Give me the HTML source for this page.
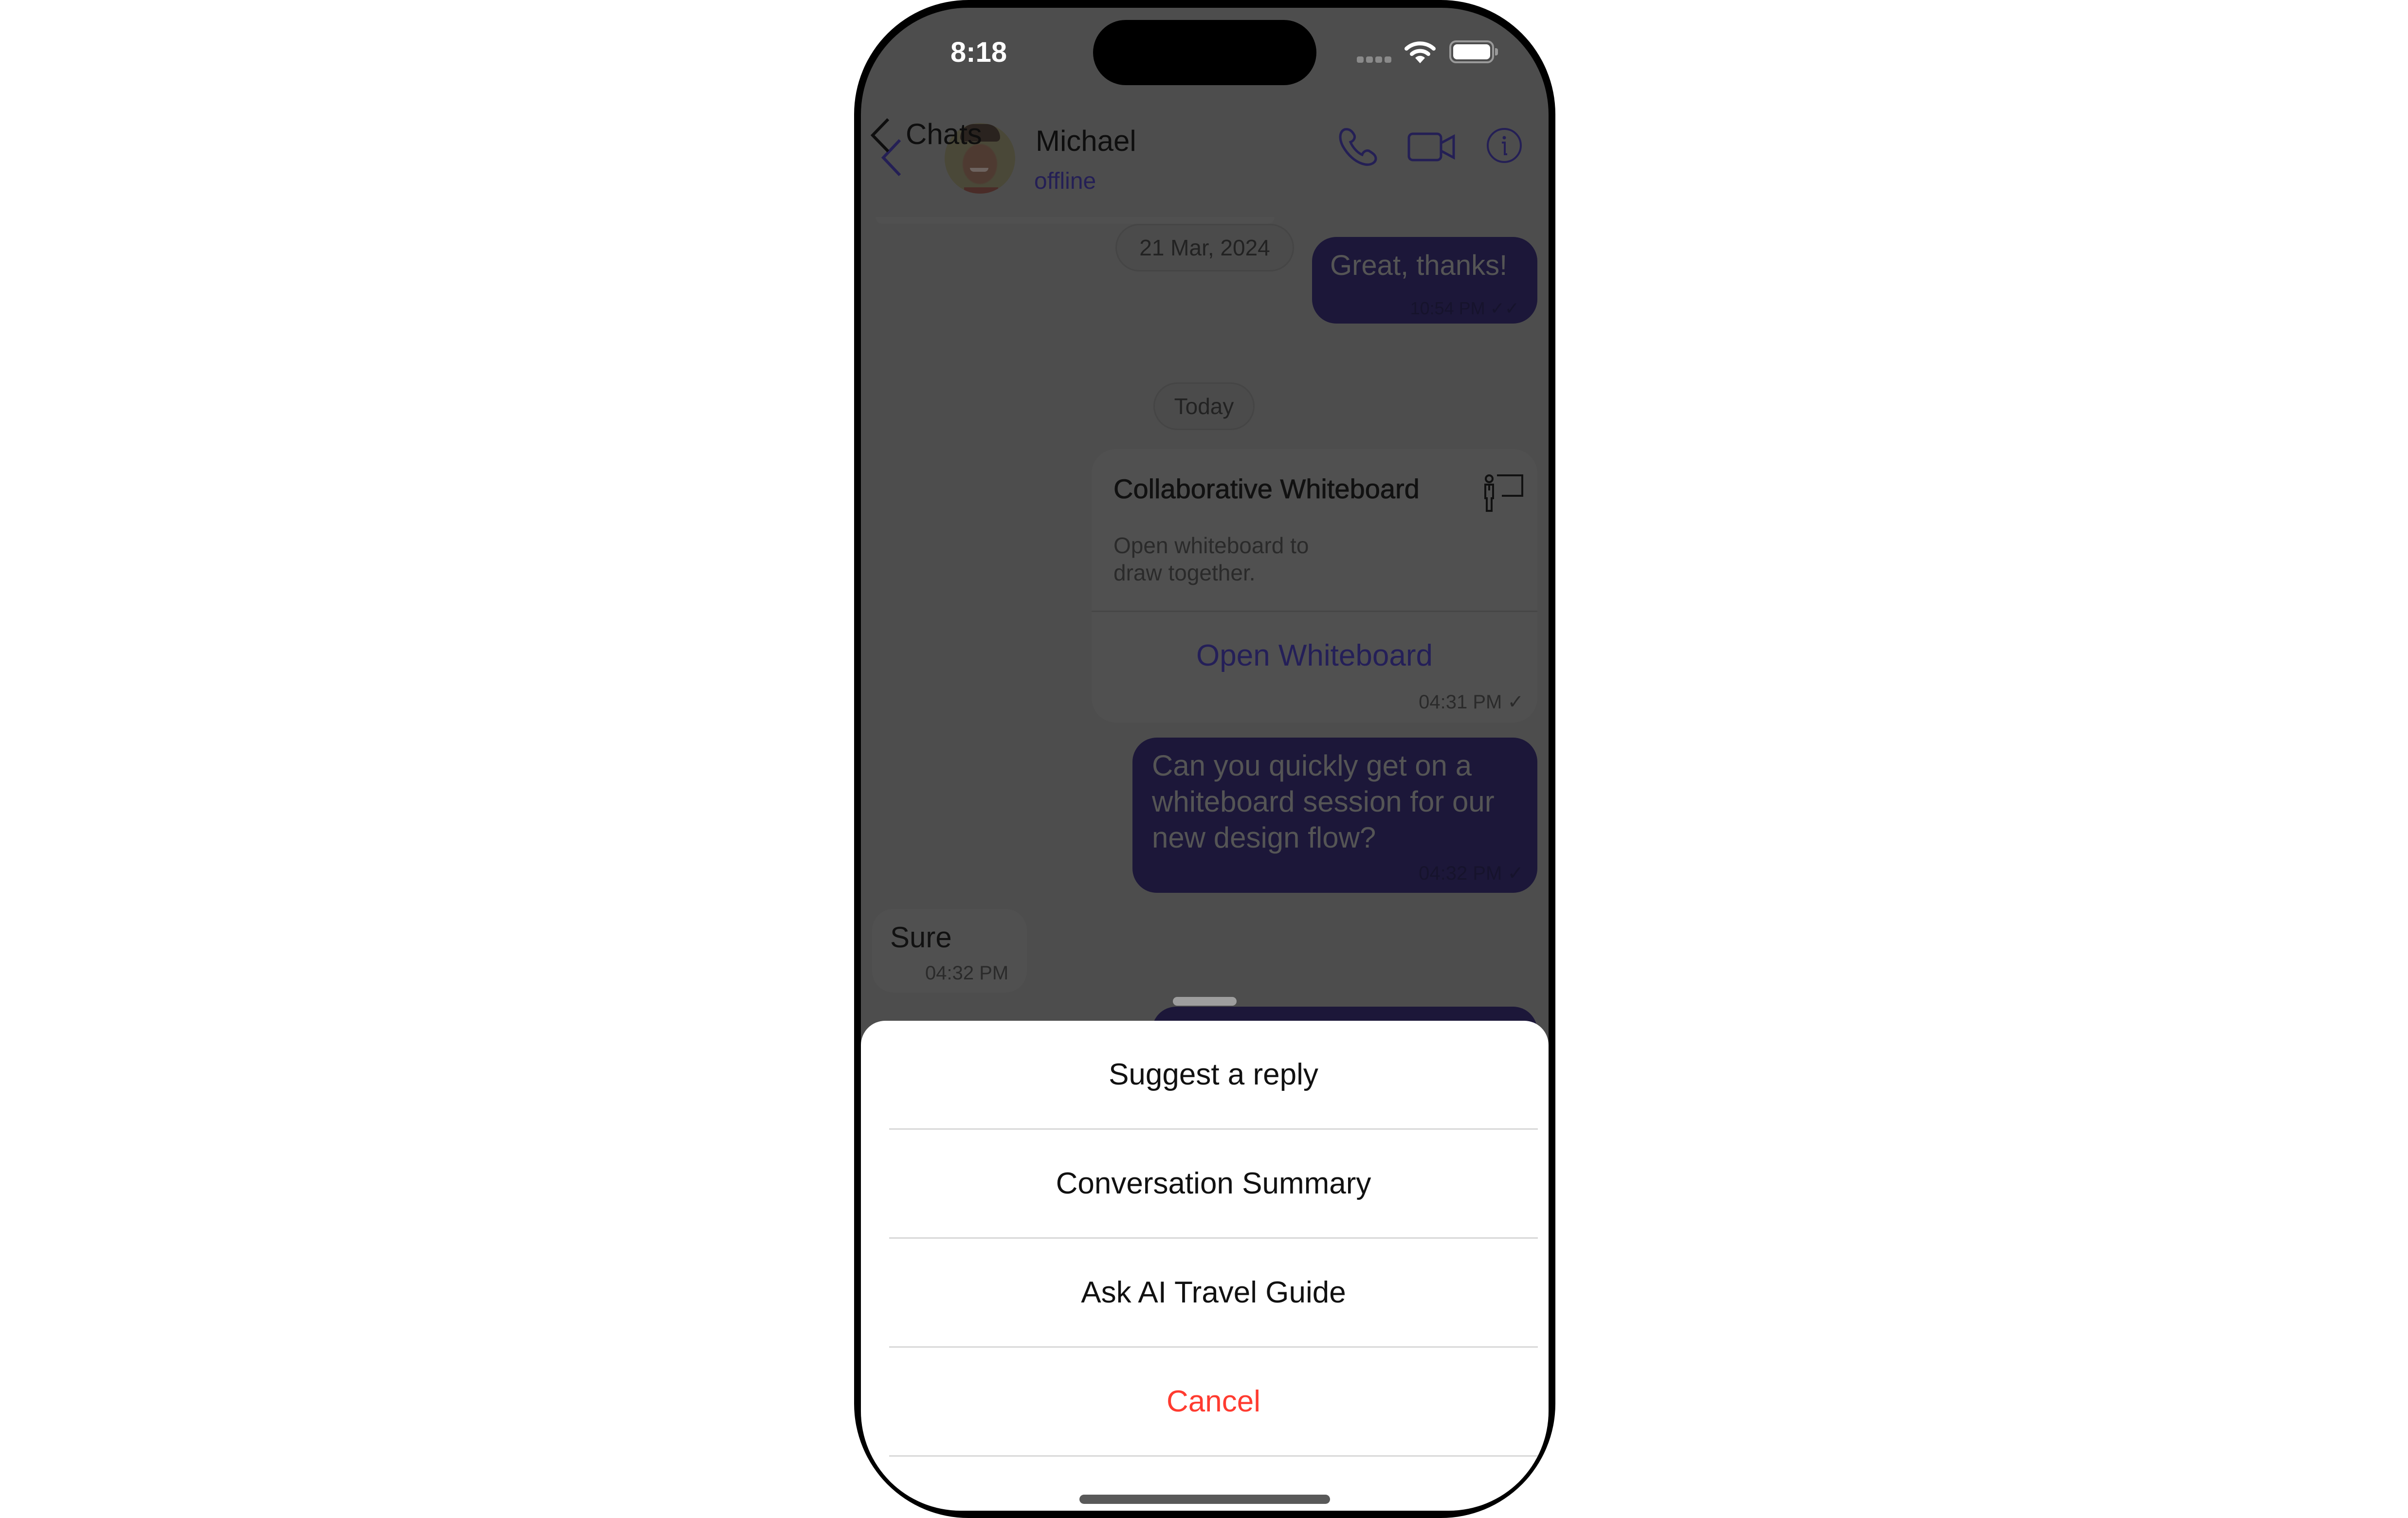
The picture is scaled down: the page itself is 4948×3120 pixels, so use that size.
<!DOCTYPE html>
<html><head><meta charset="utf-8"><style>
*{margin:0;padding:0;box-sizing:border-box}
body{width:4948px;height:3120px;background:#fff;position:relative;overflow:hidden;font-family:"Liberation Sans",sans-serif}
#phone{position:absolute;left:1755px;top:0;width:1441px;height:3120px;background:#000;border-radius:235px}
#screen{position:absolute;left:1769px;top:16px;width:1413px;height:3089px;background:#4d4d4d;border-radius:220px 220px 205px 205px;overflow:hidden}
.a{position:absolute;white-space:nowrap;line-height:1}
.bub{position:absolute;background:#1c1739;border-radius:50px}
.row{position:absolute;left:58px;right:22px;height:224px;display:flex;align-items:center;justify-content:center;font-size:62px;color:#111;border-bottom:3px solid #d8d8d8}
</style></head><body>
<div id="phone"></div>
<div id="screen">
  <div class="a" style="left:184px;top:63px;font-size:58px;font-weight:bold;color:#fff">8:18</div>
  <div class="a" style="left:477px;top:25px;width:459px;height:134px;background:#000;border-radius:67px"></div>
  <div class="a" style="left:1019px;top:100px;width:14px;height:13px;background:#8a8a8a;border-radius:4px"></div>
  <div class="a" style="left:1038px;top:100px;width:14px;height:13px;background:#8a8a8a;border-radius:4px"></div>
  <div class="a" style="left:1057px;top:100px;width:14px;height:13px;background:#8a8a8a;border-radius:4px"></div>
  <div class="a" style="left:1076px;top:100px;width:14px;height:13px;background:#8a8a8a;border-radius:4px"></div>
  <svg class="a" style="left:1117px;top:66px" width="64" height="50" viewBox="0 0 64 50">
    <path d="M4 18 A42 42 0 0 1 60 18" stroke="#fff" stroke-width="8" fill="none" stroke-linecap="round"/>
    <path d="M15 29 A26 26 0 0 1 49 29" stroke="#fff" stroke-width="8" fill="none" stroke-linecap="round"/>
    <path d="M32 48 L22 37 A14 14 0 0 1 42 37 Z" fill="#fff"/>
  </svg>
  <div class="a" style="left:1209px;top:67px;width:92px;height:47px;border:4px solid #9a9a9a;border-radius:14px;padding:4px"><div style="width:100%;height:100%;background:#fff;border-radius:8px"></div></div>
  <div class="a" style="left:1303px;top:83px;width:6px;height:15px;background:#9a9a9a;border-radius:0 4px 4px 0"></div>

  <svg class="a" style="left:40px;top:268px" width="45" height="80" viewBox="0 0 45 80"><path d="M40 4 L6 40 L40 76" stroke="#241f55" stroke-width="6" fill="none"/></svg>
  <div class="a" style="left:172px;top:237px;width:145px;height:145px;border-radius:50%;overflow:hidden;background:radial-gradient(ellipse at 50% 58%,#4e3a31 0,#4e3a31 33%,#4a4838 36%,#4a4838 100%)">
    <div style="position:absolute;left:32px;top:2px;width:82px;height:36px;background:#2a231f;border-radius:40px 40px 12px 12px"></div>
    <div style="position:absolute;left:52px;top:92px;width:38px;height:8px;background:#6e6460;border-radius:0 0 20px 20px"></div>
    <div style="position:absolute;left:40px;top:132px;width:70px;height:20px;background:#4a2c28"></div>
  </div>
  <svg class="a" style="left:16px;top:225px" width="46" height="74" viewBox="0 0 46 74"><path d="M40 4 L8 37 L40 70" stroke="#0e0e0e" stroke-width="6" fill="none"/></svg>
  <div class="a" style="left:92px;top:230px;font-size:60px;color:#0e0e0e">Chats</div>
  <div class="a" style="left:359px;top:244px;font-size:60px;color:#0e0e0e">Michael</div>
  <div class="a" style="left:356px;top:333px;font-size:48px;color:#241f55">offline</div>
  <svg class="a" style="left:980px;top:246px" width="84" height="80" viewBox="0 0 84 80"><path d="M14 4 C4 8 2 22 10 38 C20 56 36 72 56 76 C68 78 78 72 78 64 C78 56 70 52 64 48 C58 46 52 50 50 56 C40 52 30 40 26 30 C32 28 36 22 34 16 C30 8 24 2 14 4 Z" stroke="#241f55" stroke-width="5" fill="none"/></svg>
  <svg class="a" style="left:1123px;top:256px" width="100" height="60" viewBox="0 0 100 60"><rect x="3" y="3" width="66" height="54" rx="8" stroke="#241f55" stroke-width="5" fill="none"/><path d="M69 22 L95 8 V52 L69 38" stroke="#241f55" stroke-width="5" fill="none"/></svg>
  <svg class="a" style="left:1284px;top:245px" width="76" height="76" viewBox="0 0 76 76"><circle cx="38" cy="38" r="34" stroke="#241f55" stroke-width="4" fill="none"/><circle cx="38" cy="22" r="3.5" fill="#241f55"/><path d="M33 32 H39 V56 H44" stroke="#241f55" stroke-width="4" fill="none"/></svg>
  <div class="a" style="left:30px;top:430px;width:820px;height:14px;background:#505050;border-radius:0 0 30px 30px"></div>

  <div class="a" style="left:523px;top:444px;width:367px;height:98px;border:3px solid #454545;border-radius:49px;background:#4b4b4b;display:flex;align-items:center;justify-content:center;font-size:46px;color:#222">21 Mar, 2024</div>
  <div class="bub" style="left:927px;top:471px;width:463px;height:178px"></div>
  <div class="a" style="left:964px;top:501px;font-size:58px;color:#555">Great, thanks!</div>
  <div class="a" style="right:60px;top:600px;font-size:36px;color:#16132c">10:54 PM ✓✓</div>

  <div class="a" style="left:601px;top:770px;width:208px;height:98px;border:3px solid #454545;border-radius:49px;background:#4b4b4b;display:flex;align-items:center;justify-content:center;font-size:46px;color:#222">Today</div>

  <div class="a" style="left:474px;top:907px;width:916px;height:562px;background:#505050;border-radius:50px"></div>
  <div class="a" style="left:519px;top:961px;font-size:56px;color:#111;-webkit-text-stroke:0.8px #111">Collaborative Whiteboard</div>
  <svg class="a" style="left:1277px;top:958px" width="86" height="80" viewBox="0 0 86 80"><circle cx="14" cy="10" r="7" stroke="#111" stroke-width="4" fill="none"/><path d="M6 22 H22 V50 H19 V76 H9 V50 H6 Z M14 22 V34" stroke="#111" stroke-width="4" fill="none"/><path d="M30 3 H82 V45 H40" stroke="#111" stroke-width="4" fill="none"/></svg>
  <div class="a" style="left:519px;top:1077px;font-size:46px;line-height:56px;color:#2a2a2a">Open whiteboard to<br>draw together.</div>
  <div class="a" style="left:474px;top:1239px;width:916px;height:3px;background:#464646"></div>
  <div class="a" style="left:474px;top:1301px;width:916px;text-align:center;font-size:62px;color:#241f58">Open Whiteboard</div>
  <div class="a" style="right:51px;top:1407px;font-size:40px;color:#2a2a2a">04:31 PM ✓</div>

  <div class="bub" style="left:558px;top:1500px;width:832px;height:319px"></div>
  <div class="a" style="left:598px;top:1521px;font-size:60px;line-height:74px;color:#555">Can you quickly get on a<br>whiteboard session for our<br>new design flow?</div>
  <div class="a" style="right:51px;top:1759px;font-size:40px;color:#16132c">04:32 PM ✓</div>

  <div class="a" style="left:23px;top:1852px;width:318px;height:172px;background:#505050;border-radius:44px"></div>
  <div class="a" style="left:60px;top:1881px;font-size:60px;color:#111">Sure</div>
  <div class="a" style="left:132px;top:1964px;font-size:40px;color:#2a2a2a">04:32 PM</div>

  <div class="a" style="left:641px;top:2033px;width:131px;height:18px;background:#9e9e9e;border-radius:9px"></div>
  <div class="bub" style="left:598px;top:2053px;width:792px;height:100px"></div>

  <div class="a" style="left:0;top:2082px;width:1413px;height:1010px;background:#fff;border-radius:50px 50px 0 0">
    <div class="row" style="top:0">Suggest a reply</div>
    <div class="row" style="top:224px">Conversation Summary</div>
    <div class="row" style="top:448px">Ask AI Travel Guide</div>
    <div class="row" style="top:672px;color:#ff3b30">Cancel</div>
  </div>
  <div class="a" style="left:449px;top:3056px;width:515px;height:19px;background:#595959;border-radius:10px"></div>
</div>
</body></html>
